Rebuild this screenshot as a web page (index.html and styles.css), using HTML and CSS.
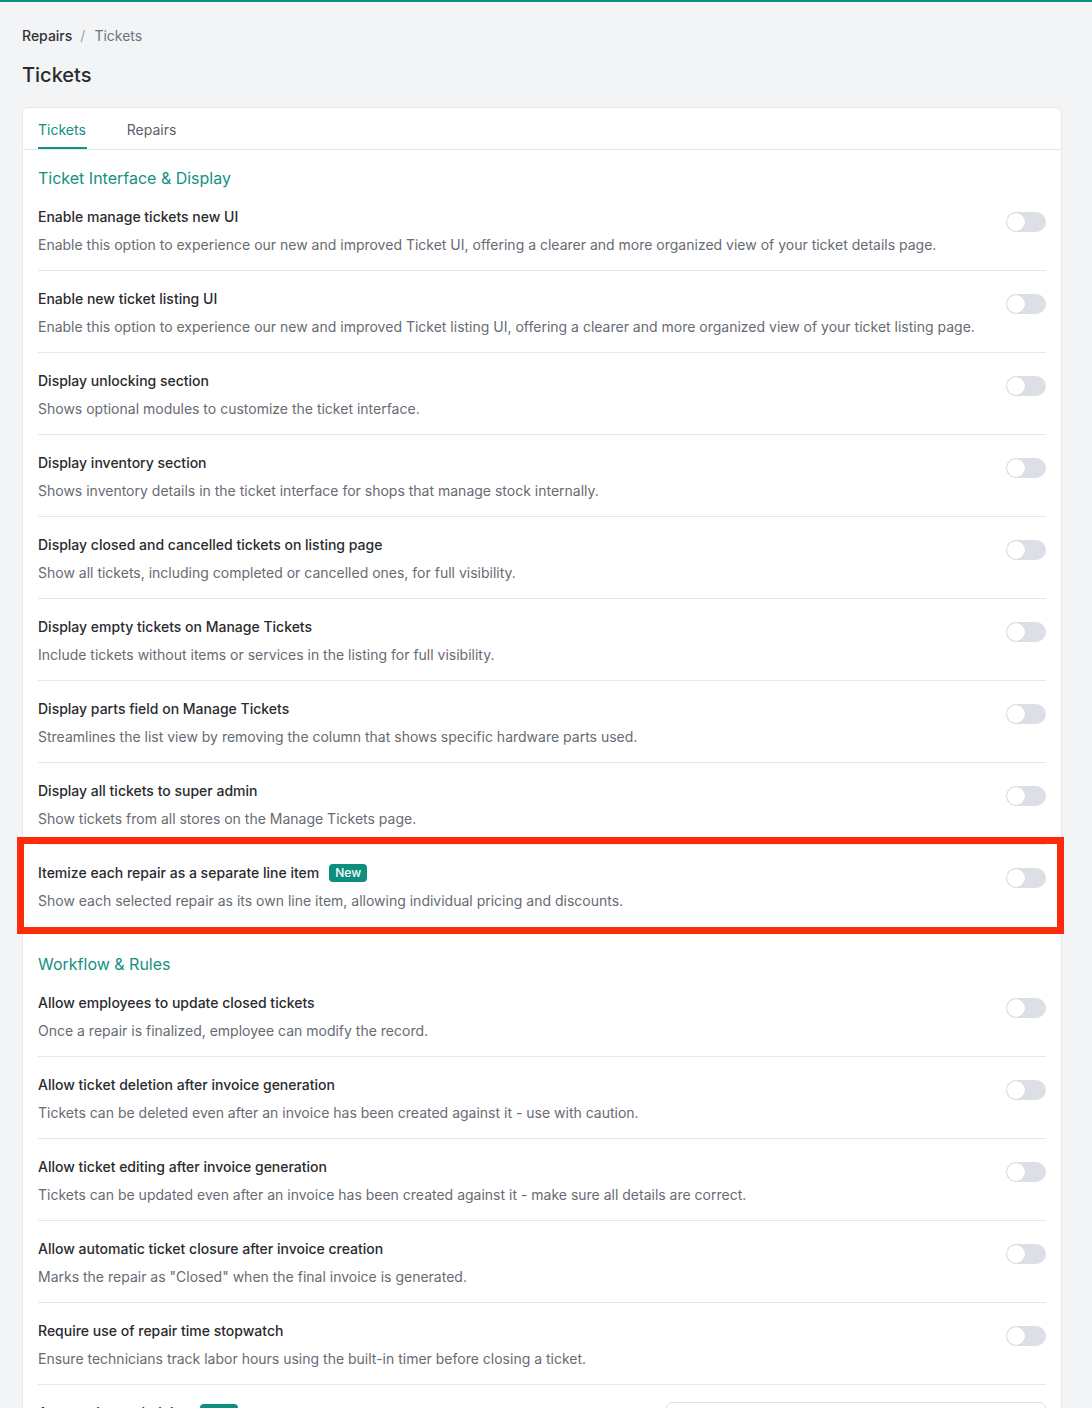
FILE: index.html
```html
<!DOCTYPE html>
<html lang="en">
<head>
<meta charset="utf-8">
<title>Tickets</title>
<link rel="stylesheet" href="styles.css">
</head>
<body>
<div class="page">
  <nav class="crumbs"><span class="crumb-link">Repairs</span><span class="crumb-sep">/</span><span class="crumb-current">Tickets</span></nav>
  <h1 class="page-title">Tickets</h1>
  <div class="card">
    <div class="tabs">
      <div class="tab active">Tickets</div>
      <div class="tab">Repairs</div>
    </div>
    <div class="content">
      <section class="section">
        <h2 class="section-title">Ticket Interface &amp; Display</h2>
        <div class="row">
          <div class="row-text"><div class="row-title">Enable manage tickets new UI</div><div class="row-desc">Enable this option to experience our new and improved Ticket UI, offering a clearer and more organized view of your ticket details page.</div></div>
          <span class="toggle"><span class="knob"></span></span>
        </div>
        <div class="row">
          <div class="row-text"><div class="row-title">Enable new ticket listing UI</div><div class="row-desc">Enable this option to experience our new and improved Ticket listing UI, offering a clearer and more organized view of your ticket listing page.</div></div>
          <span class="toggle"><span class="knob"></span></span>
        </div>
        <div class="row">
          <div class="row-text"><div class="row-title">Display unlocking section</div><div class="row-desc">Shows optional modules to customize the ticket interface.</div></div>
          <span class="toggle"><span class="knob"></span></span>
        </div>
        <div class="row">
          <div class="row-text"><div class="row-title">Display inventory section</div><div class="row-desc">Shows inventory details in the ticket interface for shops that manage stock internally.</div></div>
          <span class="toggle"><span class="knob"></span></span>
        </div>
        <div class="row">
          <div class="row-text"><div class="row-title">Display closed and cancelled tickets on listing page</div><div class="row-desc">Show all tickets, including completed or cancelled ones, for full visibility.</div></div>
          <span class="toggle"><span class="knob"></span></span>
        </div>
        <div class="row">
          <div class="row-text"><div class="row-title">Display empty tickets on Manage Tickets</div><div class="row-desc">Include tickets without items or services in the listing for full visibility.</div></div>
          <span class="toggle"><span class="knob"></span></span>
        </div>
        <div class="row">
          <div class="row-text"><div class="row-title">Display parts field on Manage Tickets</div><div class="row-desc">Streamlines the list view by removing the column that shows specific hardware parts used.</div></div>
          <span class="toggle"><span class="knob"></span></span>
        </div>
        <div class="row">
          <div class="row-text"><div class="row-title">Display all tickets to super admin</div><div class="row-desc">Show tickets from all stores on the Manage Tickets page.</div></div>
          <span class="toggle"><span class="knob"></span></span>
        </div>
        <div class="row highlighted">
          <div class="row-text"><div class="row-title">Itemize each repair as a separate line item <span class="badge">New</span></div><div class="row-desc">Show each selected repair as its own line item, allowing individual pricing and discounts.</div></div>
          <span class="toggle"><span class="knob"></span></span>
          <div class="highlight-box"></div>
        </div>
      </section>
      <section class="section">
        <h2 class="section-title">Workflow &amp; Rules</h2>
        <div class="row">
          <div class="row-text"><div class="row-title">Allow employees to update closed tickets</div><div class="row-desc">Once a repair is finalized, employee can modify the record.</div></div>
          <span class="toggle"><span class="knob"></span></span>
        </div>
        <div class="row">
          <div class="row-text"><div class="row-title">Allow ticket deletion after invoice generation</div><div class="row-desc">Tickets can be deleted even after an invoice has been created against it - use with caution.</div></div>
          <span class="toggle"><span class="knob"></span></span>
        </div>
        <div class="row">
          <div class="row-text"><div class="row-title">Allow ticket editing after invoice generation</div><div class="row-desc">Tickets can be updated even after an invoice has been created against it - make sure all details are correct.</div></div>
          <span class="toggle"><span class="knob"></span></span>
        </div>
        <div class="row">
          <div class="row-text"><div class="row-title">Allow automatic ticket closure after invoice creation</div><div class="row-desc">Marks the repair as "Closed" when the final invoice is generated.</div></div>
          <span class="toggle"><span class="knob"></span></span>
        </div>
        <div class="row">
          <div class="row-text"><div class="row-title">Require use of repair time stopwatch</div><div class="row-desc">Ensure technicians track labor hours using the built-in timer before closing a ticket.</div></div>
          <span class="toggle"><span class="knob"></span></span>
        </div>
        <div class="row">
          <div class="row-text"><div class="row-title">Auto assign technician <span class="badge">New</span></div><div class="row-desc">Automatically assign new tickets to the selected technician.</div></div>
          <div class="select-box"><span class="select-value">Select technician</span></div>
        </div>
      </section>
    </div>
  </div>
</div>
</body>
</html>
```

FILE: styles.css
```css
* { box-sizing: border-box; }
html, body { margin: 0; padding: 0; }
body {
  background: #f3f4f6;
  font-family: Inter, "Noto Sans", "Liberation Sans", sans-serif;
  font-size: 14px;
  line-height: 20px;
  color: #27272a;
  border-top: 2px solid #138f80;
}
.page {
  padding: 24px 30px 0 22px;
}
.crumbs {
  display: flex;
  align-items: center;
  font-size: 14px;
  line-height: 20px;
}
.crumb-link { color: #303236; font-weight: 500; }
.crumb-sep { color: #9ca3af; margin: 0 9px 0 8px; }
.crumb-current { color: #6b7280; }
.page-title {
  margin: 15px 0 18px;
  font-size: 20px;
  line-height: 28px;
  font-weight: 500;
  color: #2a2b2e;
}
.card {
  background: #fff;
  border: 1px solid #e5e7eb;
  border-radius: 6px;
  min-height: 1400px;
}
.tabs {
  display: flex;
  gap: 40px;
  padding: 0 15px;
  border-bottom: 1px solid #e5e7eb;
  height: 42px;
}
.tab {
  padding: 12px 0 7px;
  line-height: 20px;
  color: #5b5f66;
  border-bottom: 2px solid transparent;
  height: 41px;
}
.tab.active {
  color: #0f8f80;
  border-bottom-color: #119484;
  padding-right: 1px;
}
.content {
  padding: 0 15px 0 15px;
}
.section + .section { margin-top: 10px; }
.section-title {
  margin: 0;
  padding-top: 17px;
  font-size: 16px;
  line-height: 22px;
  font-weight: 400;
  color: #13917f;
}
.row {
  position: relative;
  display: flex;
  justify-content: space-between;
  align-items: flex-start;
  padding: 18px 0 15px;
  border-bottom: 1px solid #e5e7eb;
}
.row:last-child { border-bottom: none; }
.row-title {
  display: flex;
  align-items: center;
  color: #2a2b2f;
  font-weight: 500;
  line-height: 20px;
}
.row-desc {
  margin-top: 8px;
  color: #676b73;
  line-height: 20px;
}
.badge {
  display: inline-block;
  margin-left: 10px;
  height: 18px;
  padding: 0 6px;
  border-radius: 4px;
  background: #0e8f7e;
  color: #fff;
  font-size: 12px;
  font-weight: 500;
  line-height: 18px;
}
.toggle {
  flex: none;
  position: relative;
  width: 40px;
  height: 20px;
  margin-top: 5px;
  border-radius: 10px;
  background: #dcdfe5;
}
.knob {
  position: absolute;
  left: 1px;
  top: 1px;
  width: 18px;
  height: 18px;
  border-radius: 50%;
  background: #fff;
  box-shadow: 0 0 0 0.5px #d1d5db;
}
.highlight-box {
  position: absolute;
  left: -21px;
  right: -18px;
  top: -8px;
  bottom: -8px;
  border: 7px solid #fe2a0c;
  pointer-events: none;
}
.select-box {
  flex: none;
  width: 380px;
  height: 38px;
  margin-top: -1px;
  border: 1px solid #dcdfe5;
  border-radius: 6px;
  padding: 8px 12px;
  color: #9ca3af;
}
```
